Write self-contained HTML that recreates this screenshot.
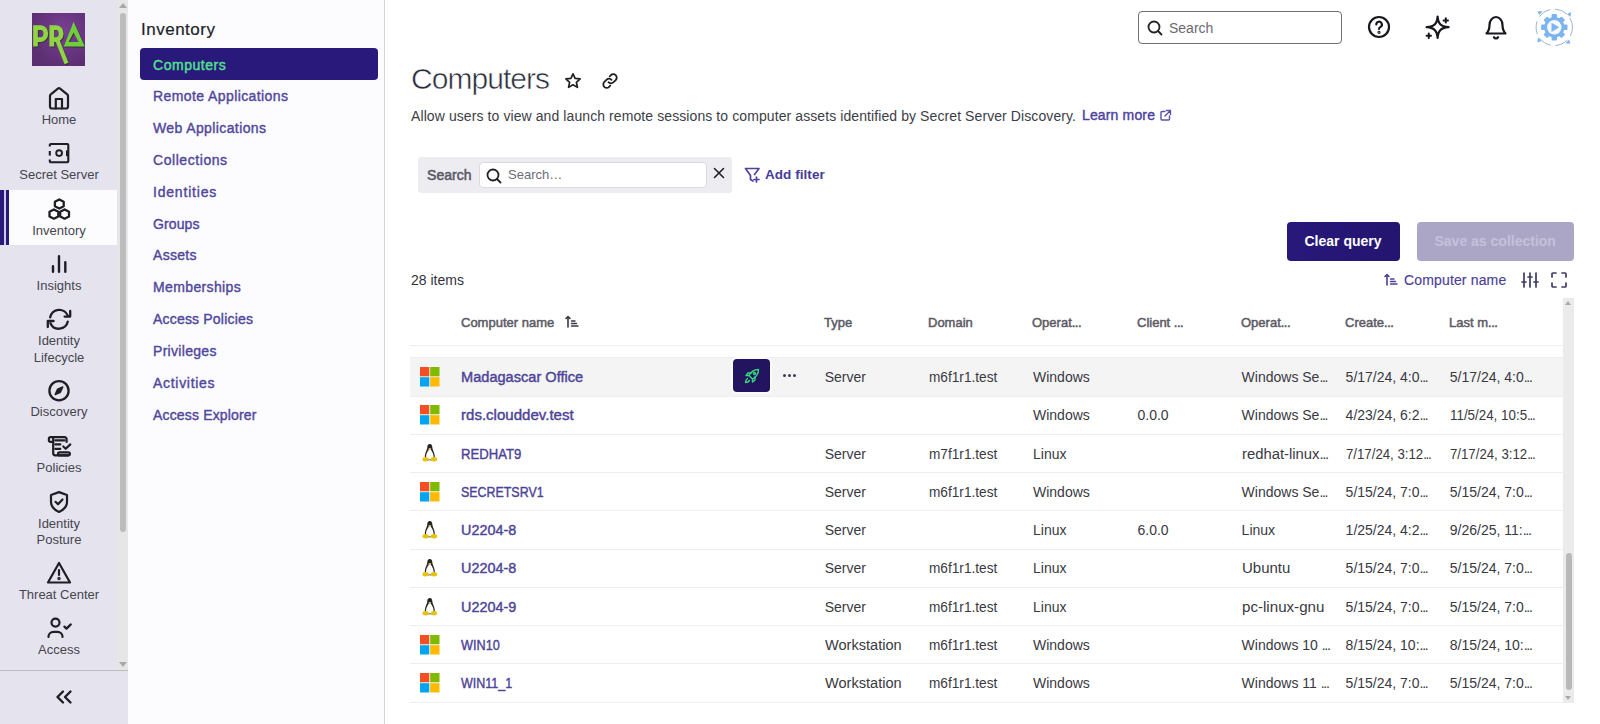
<!DOCTYPE html>
<html><head><meta charset="utf-8">
<style>
*{box-sizing:border-box;margin:0;padding:0}
html,body{width:1600px;height:724px;overflow:hidden;background:#fff;font-family:"Liberation Sans",sans-serif;color:#2b2b35}
.t{position:absolute;white-space:nowrap;line-height:1}
svg{position:absolute;overflow:visible}
#rail{position:absolute;left:0;top:0;width:128px;height:724px;background:#e5e3ee}
#panel{position:absolute;left:128px;top:0;width:257px;height:724px;background:#fcfcfe;border-right:1px solid #d4d4d8}
.rl{font-size:13px;color:#45454f;width:118px;left:0;text-align:center}
.nav{left:153px;font-size:14px;font-weight:400;-webkit-text-stroke:0.4px currentColor;letter-spacing:0.3px;color:#51489b}
.med{-webkit-text-stroke:0.4px currentColor}
.hd{font-size:13px;font-weight:400;-webkit-text-stroke:0.5px currentColor;color:#5b5b66}
.cell{font-size:14px;color:#393942}
.el{letter-spacing:-1.3px}
.lnk{font-size:14px;font-weight:400;-webkit-text-stroke:0.4px currentColor;color:#4d4497;left:461px;transform-origin:0 0}
</style></head>
<body>
<!-- ============ LEFT RAIL ============ -->
<div id="rail">
  <!-- logo -->
  <div style="position:absolute;left:32px;top:13px;width:53px;height:53px;overflow:hidden;background:radial-gradient(ellipse at 60% 35%,#7a3f95,#5c2f72 75%)">
    <svg width="53" height="53" viewBox="0 0 53 53" style="left:0;top:0">
      <g transform="translate(0.9,0.9)" opacity="0.55">
        <g fill="none" stroke="#1d2a0a" stroke-width="4.7" stroke-linejoin="miter">
          <path d="M3.5 33.6 V14.6 H8.8 a5 6 0 0 1 0 12 H3.5"/>
          <path d="M19.8 33.6 V14.6 H24.2 a5 6 0 0 1 0 12 H19.8"/>
          <path d="M25.5 27.5 L34.5 50.5" stroke-width="4.2"/>
        </g>
        <path d="M41.6 8.8 L52.8 33.6 H31.8 Z M41.6 19.5 L36.6 29 H46.6 Z" fill="#1d2a0a" fill-rule="evenodd"/>
      </g>
      <g fill="none" stroke="#8fd443" stroke-width="4.7" stroke-linejoin="miter">
        <path d="M3.5 33.6 V14.6 H8.8 a5 6 0 0 1 0 12 H3.5"/>
        <path d="M19.8 33.6 V14.6 H24.2 a5 6 0 0 1 0 12 H19.8"/>
        <path d="M25.5 27.5 L34.5 50.5" stroke-width="4.2"/>
      </g>
      <path d="M41.6 8.8 L52.8 33.6 H31.8 Z M41.6 19.5 L36.6 29 H46.6 Z" fill="#6fcf3a" fill-rule="evenodd"/>
    </svg>
  </div>
  <!-- active item -->
  <div style="position:absolute;left:0;top:190px;width:118px;height:55px;background:#fcfcfe"></div>
  <div style="position:absolute;left:0;top:190px;width:4px;height:55px;background:#28187a"></div>
  <div style="position:absolute;left:4px;top:190px;width:2px;height:55px;background:#cdc8ea"></div>
  <div style="position:absolute;left:6px;top:190px;width:3px;height:55px;background:#28187a"></div>

  <!-- scrollbar -->
  <div style="position:absolute;left:117px;top:0;width:11px;height:670px;background:#e6e6e6"></div>
  <div style="position:absolute;left:120px;top:13px;width:6px;height:519px;background:#bcbcbc;border-radius:3px"></div>
  <div style="position:absolute;left:119px;top:3px;width:0;height:0;border-left:4px solid transparent;border-right:4px solid transparent;border-bottom:5px solid #a8a8a8"></div>
  <div style="position:absolute;left:119px;top:662px;width:0;height:0;border-left:4px solid transparent;border-right:4px solid transparent;border-top:5px solid #a8a8a8"></div>
  <div style="position:absolute;left:0;top:670px;width:128px;height:1px;background:#bdbcc2"></div>

  <!-- icons -->
  <svg width="24" height="24" viewBox="0 0 24 24" style="left:47px;top:86px" fill="none" stroke="#1e1e24" stroke-width="2.2" stroke-linejoin="round" stroke-linecap="round">
    <path d="M3 10 Q3 9 3.8 8.4 L11.2 2.4 Q12 1.8 12.8 2.4 L20.2 8.4 Q21 9 21 10 V20.5 a2 2 0 0 1 -2 2 H5 a2 2 0 0 1 -2 -2 Z"/>
    <path d="M8.8 22.5 V13 H15 V22.5"/>
  </svg>
  <div class="t rl" style="top:113px">Home</div>

  <svg width="24" height="24" viewBox="0 0 24 24" style="left:47px;top:141px" fill="none" stroke="#1e1e24" stroke-width="2.1" stroke-linejoin="round">
    <path d="M2.8 5.6 V4 a1 1 0 0 1 1 -1 H20.3 a1 1 0 0 1 1 1 V20.3 a1 1 0 0 1 -1 1 H3.8 a1 1 0 0 1 -1 -1 V18.6"/>
    <path d="M2.8 10 V14.6"/>
    <circle cx="12.1" cy="12.1" r="2.9" stroke-width="1.9"/>
    <rect x="19" y="9.4" width="2.3" height="5.8" fill="#1e1e24" stroke="none"/>
  </svg>
  <div class="t rl" style="top:168px">Secret Server</div>

  <svg width="24" height="24" viewBox="0 0 24 24" style="left:47px;top:197px" fill="none" stroke="#1e1e24" stroke-width="2.3" stroke-linejoin="round">
    <path d="M12.3 2.4 L16.7 4.7 V9.3 L12.3 11.6 L7.9 9.3 V4.7 Z"/>
    <path d="M6.9 12.5 L11.3 14.8 V19.4 L6.9 21.7 L2.5 19.4 V14.8 Z"/>
    <path d="M17.6 12.5 L22 14.8 V19.4 L17.6 21.7 L13.2 19.4 V14.8 Z"/>
  </svg>
  <div class="t rl" style="top:224px">Inventory</div>

  <svg width="24" height="24" viewBox="0 0 24 24" style="left:47px;top:252px" fill="none" stroke="#1e1e24" stroke-width="2.4" stroke-linecap="round">
    <path d="M6 14.2 V19.8 M12 4.2 V19.8 M18.3 10.2 V19.8"/>
  </svg>
  <div class="t rl" style="top:279px">Insights</div>

  <svg width="26" height="24" viewBox="0 0 26 24" style="left:46px;top:307px" fill="none" stroke="#1e1e24" stroke-width="2.3" stroke-linecap="round" stroke-linejoin="round">
    <path d="M4.2 10.3 A9.2 9.2 0 0 1 21.8 8.6"/>
    <path d="M24.2 3.8 V9.6 H18.6"/>
    <path d="M21.8 14.6 A9.2 9.2 0 0 1 4.4 16.2"/>
    <path d="M1.8 20 V14 H7.6"/>
  </svg>
  <div class="t rl" style="top:334px">Identity</div>
  <div class="t rl" style="top:351px">Lifecycle</div>

  <svg width="24" height="24" viewBox="0 0 24 24" style="left:47px;top:379px" fill="none" stroke="#1e1e24" stroke-width="2.3" stroke-linejoin="round">
    <circle cx="12" cy="11.7" r="9.6"/>
    <path d="M15.8 7.9 L13.4 13.3 L8.2 15.5 L10.6 10.1 Z" fill="#1e1e24" stroke-width="1.4"/>
  </svg>
  <div class="t rl" style="top:405px">Discovery</div>

  <svg width="26" height="24" viewBox="0 0 26 24" style="left:46px;top:435px" fill="none" stroke="#1e1e24" stroke-width="2.2" stroke-linecap="round" stroke-linejoin="round">
    <path d="M7.2 6.9 H4.4 a1.5 1.5 0 0 1 -1.5 -1.5 V3.7 a1.5 1.5 0 0 1 1.5 -1.5 H18.6 a2 2 0 0 1 2 2 V6.9"/>
    <path d="M7.2 2.2 V18.3 a2 2 0 0 0 2 2 H22"/>
    <rect x="12" y="17.4" width="11.9" height="2.9" rx="1.45"/>
    <path d="M9.3 5.3 H18.5 M9.3 9.4 H14.3 M9.3 13.8 H14.3"/>
    <path d="M17.3 11.5 L19.7 13.8 L24.3 9.4"/>
  </svg>
  <div class="t rl" style="top:461px">Policies</div>

  <svg width="24" height="24" viewBox="0 0 24 24" style="left:47px;top:490px" fill="none" stroke="#1e1e24" stroke-width="2.2" stroke-linecap="round" stroke-linejoin="round">
    <path d="M12 2.1 L20 5 V12 C20 16.8 16.8 19.8 12 21.9 C7.2 19.8 4 16.8 4 12 V5 Z"/>
    <path d="M8.5 11.8 L11 14.3 L15.5 9.5"/>
  </svg>
  <div class="t rl" style="top:517px">Identity</div>
  <div class="t rl" style="top:533px">Posture</div>

  <svg width="26" height="24" viewBox="0 0 26 24" style="left:46px;top:561px" fill="none" stroke="#1e1e24" stroke-width="2.2" stroke-linecap="round" stroke-linejoin="round">
    <path d="M13 2 L24 21.5 H2 Z"/>
    <path d="M13 9 V14"/>
    <circle cx="13" cy="17.5" r="0.6" fill="#1e1e24"/>
  </svg>
  <div class="t rl" style="top:588px">Threat Center</div>

  <svg width="28" height="24" viewBox="0 0 28 24" style="left:45px;top:616px" fill="none" stroke="#1e1e24" stroke-width="2.2" stroke-linecap="round" stroke-linejoin="round">
    <circle cx="10.5" cy="6.6" r="4"/>
    <path d="M3.5 21 V20.5 a5 4.7 0 0 1 5 -4.7 H12.5 a5 4.7 0 0 1 5 4.7 V21"/>
    <path d="M19.4 10.6 L21.5 12.6 L25.8 8.4"/>
  </svg>
  <div class="t rl" style="top:643px">Access</div>

  <svg width="18" height="14" viewBox="0 0 18 14" style="left:55px;top:690px" fill="none" stroke="#1e1e24" stroke-width="2.4" stroke-linecap="round" stroke-linejoin="round">
    <path d="M8 1.5 L2.5 7 L8 12.5 M15.5 1.5 L10 7 L15.5 12.5"/>
  </svg>
</div>

<!-- ============ PANEL ============ -->
<div id="panel"></div>
<div class="t" style="left:141px;top:21px;font-size:17px;letter-spacing:0.5px;color:#22222a;-webkit-text-stroke:0.2px currentColor">Inventory</div>
<div style="position:absolute;left:140px;top:48px;width:238px;height:32px;background:#28197a;border-radius:4px"></div>
<div class="t nav" style="top:58px;color:#50df8e;letter-spacing:0.54px;-webkit-text-stroke:0.5px currentColor">Computers</div>
<div class="t nav" style="top:89px;letter-spacing:0.41px">Remote Applications</div>
<div class="t nav" style="top:121px;letter-spacing:0.39px">Web Applications</div>
<div class="t nav" style="top:153px;letter-spacing:0.56px">Collections</div>
<div class="t nav" style="top:185px;letter-spacing:0.80px">Identities</div>
<div class="t nav" style="top:217px;letter-spacing:0.10px">Groups</div>
<div class="t nav" style="top:248px">Assets</div>
<div class="t nav" style="top:280px;letter-spacing:0.37px">Memberships</div>
<div class="t nav" style="top:312px;letter-spacing:0.19px">Access Policies</div>
<div class="t nav" style="top:344px">Privileges</div>
<div class="t nav" style="top:376px;letter-spacing:0.70px">Activities</div>
<div class="t nav" style="top:408px;letter-spacing:0.16px">Access Explorer</div>

<!-- ============ MAIN ============ -->
<div id="main"></div>
<!-- top header -->
<div style="position:absolute;left:1138px;top:11px;width:204px;height:33px;border:1px solid #707070;border-radius:4px;background:#fff"></div>
<svg width="16" height="16" viewBox="0 0 16 16" style="left:1147px;top:19.5px" fill="none" stroke="#222" stroke-width="1.8" stroke-linecap="round"><circle cx="7" cy="7" r="5.5"/><path d="M11 11 L14.5 14.5"/></svg>
<div class="t" style="left:1169px;top:20.6px;font-size:14px;color:#6a6a72">Search</div>
<svg width="24" height="24" viewBox="0 0 24 24" style="left:1367px;top:15px" fill="none" stroke="#18181c" stroke-width="2.2" stroke-linecap="round"><circle cx="12" cy="12" r="10"/><path d="M9.3 9.5 a2.8 2.8 0 1 1 4.2 2.4 C12.5 12.5 12 13 12 14"/><circle cx="12" cy="17.3" r="0.5" fill="#18181c"/></svg>
<svg width="26" height="26" viewBox="0 0 26 26" style="left:1424px;top:14px" fill="none" stroke="#18181c" stroke-width="2.2" stroke-linecap="round" stroke-linejoin="round"><path d="M13.6 2.6 C14.2 9.6 16.4 12.5 24.6 13.2 C16.4 13.9 14.2 16.9 13.6 23.9 C13 16.9 10.8 13.9 2.6 13.2 C10.8 12.5 13 9.6 13.6 2.6 Z"/><path d="M21.8 4.2 V8.6 M19.6 6.4 H24" stroke-width="2"/><path d="M4.8 19.6 V24 M2.6 21.8 H7" stroke-width="2"/></svg>
<svg width="24" height="26" viewBox="0 0 24 26" style="left:1484px;top:14px" fill="none" stroke="#18181c" stroke-width="2.2" stroke-linecap="round" stroke-linejoin="round"><path d="M5.5 11 a6.5 8 0 0 1 13 0 C18.5 15 19.5 17.5 21.5 19.5 H2.5 C4.5 17.5 5.5 15 5.5 11 Z"/><path d="M10 23.2 a2.2 2.2 0 0 0 4 0"/></svg>
<!-- avatar gear -->
<svg width="40" height="40" viewBox="0 0 40 40" style="left:1534px;top:7px">
  <circle cx="20.3" cy="20.3" r="18.2" fill="none" stroke="#93a9c8" stroke-width="0.9" stroke-dasharray="13 5" stroke-dashoffset="4"/>
  <g fill="#7ab2ee">
    <path d="M3.5 4.5 L8.5 4 L5.5 8 Z"/><path d="M37 5 L36.5 10 L33 7 Z"/>
    <path d="M3.5 35.5 L4 30.5 L7.5 34 Z"/><path d="M36.5 36.5 L31.5 36.5 L35 32.5 Z"/>
  </g>
  <g transform="translate(20.3,20.3)" fill="#7cb4f0">
    <circle r="10.3"/>
    <g id="teeth"><rect x="-2.7" y="-13.2" width="5.4" height="5" rx="1"/><rect x="-2.7" y="8.2" width="5.4" height="5" rx="1"/><rect x="-13.2" y="-2.7" width="5" height="5.4" rx="1"/><rect x="8.2" y="-2.7" width="5" height="5.4" rx="1"/></g>
    <g transform="rotate(45)"><rect x="-2.7" y="-12.8" width="5.4" height="5" rx="1"/><rect x="-2.7" y="7.8" width="5.4" height="5" rx="1"/><rect x="-12.8" y="-2.7" width="5" height="5.4" rx="1"/><rect x="7.8" y="-2.7" width="5" height="5.4" rx="1"/></g>
    <circle r="7.2" fill="#f5faff"/>
    <path d="M-2.8 -4.6 L5 0 L-2.8 4.6 Z"/>
  </g>
</svg>

<!-- title -->
<div class="t" style="left:411px;top:63.8px;font-size:30px;letter-spacing:-0.95px;color:#2a2c39;-webkit-text-stroke:0.55px #fff">Computers</div>
<svg width="18" height="18" viewBox="0 0 24 24" style="left:564px;top:72px" fill="none" stroke="#1e1e24" stroke-width="2.3" stroke-linejoin="round"><path d="M12 2.5 L14.8 8.6 L21.5 9.3 L16.5 13.8 L17.9 20.5 L12 17.1 L6.1 20.5 L7.5 13.8 L2.5 9.3 L9.2 8.6 Z"/></svg>
<svg width="18" height="18" viewBox="0 0 24 24" style="left:601px;top:72px" fill="none" stroke="#1e1e24" stroke-width="2.4" stroke-linecap="round"><path d="M10 13.5 a4.5 4.5 0 0 0 6.4 0.4 l3.2 -3.2 a4.5 4.5 0 0 0 -6.4 -6.4 l-1.5 1.5"/><path d="M14 10.5 a4.5 4.5 0 0 0 -6.4 -0.4 l-3.2 3.2 a4.5 4.5 0 0 0 6.4 6.4 l1.5 -1.5"/></svg>

<!-- description -->
<div class="t" style="left:411px;top:108.8px;font-size:14px;letter-spacing:0.09px;color:#3d3d47">Allow users to view and launch remote sessions to computer assets identified by Secret Server Discovery.</div>
<div class="t med" style="left:1082px;top:108.2px;font-size:14px;letter-spacing:0.15px;color:#4d43a0">Learn more</div>
<svg width="13" height="13" viewBox="0 0 13 13" style="left:1159px;top:109px" fill="none" stroke="#5a50a8" stroke-width="1.4" stroke-linecap="round" stroke-linejoin="round"><path d="M6 2.5 H3 a1 1 0 0 0 -1 1 V10 a1 1 0 0 0 1 1 H9.5 a1 1 0 0 0 1 -1 V7"/><path d="M7.5 1.5 H11.5 V5.5 M11.5 1.5 L6 7"/></svg>

<!-- filter bar -->
<div style="position:absolute;left:418px;top:156.5px;width:314px;height:36px;background:#ededf1;border-radius:3px"></div>
<div class="t" style="left:427px;top:167.8px;font-size:14px;letter-spacing:0.05px;-webkit-text-stroke:0.55px currentColor;color:#5a5a66">Search</div>
<div style="position:absolute;left:478.5px;top:162px;width:228px;height:26px;background:#fff;border:1px solid #dadade;border-radius:4px"></div>
<svg width="16" height="16" viewBox="0 0 16 16" style="left:486px;top:167.5px" fill="none" stroke="#222" stroke-width="1.8" stroke-linecap="round"><circle cx="7" cy="7" r="5.5"/><path d="M11 11 L14.5 14.5"/></svg>
<div class="t" style="left:508px;top:168px;font-size:13px;color:#6c6c76">Search…</div>
<svg width="12" height="12" viewBox="0 0 12 12" style="left:713px;top:166.5px" fill="none" stroke="#222" stroke-width="1.6" stroke-linecap="round"><path d="M1.5 1.5 L10.5 10.5 M10.5 1.5 L1.5 10.5"/></svg>
<svg width="17" height="16" viewBox="0 0 17 16" style="left:743.5px;top:167px" fill="none" stroke="#4d42a0" stroke-width="1.7" stroke-linecap="round" stroke-linejoin="round"><path d="M9 14 L6.5 12.5 V8.5 L1.5 1.5 H15 L10.5 7.5"/><path d="M12.5 10 V15 M10 12.5 H15"/></svg>
<div class="t" style="left:765px;top:168.1px;font-size:13.5px;font-weight:700;letter-spacing:0.05px;color:#463c9c">Add filter</div>

<!-- buttons -->
<div style="position:absolute;left:1287px;top:222px;width:113px;height:38.5px;background:linear-gradient(90deg,#27187a,#241570);border-radius:4px"></div>
<div class="t" style="left:1304.5px;top:234.1px;font-size:14px;font-weight:700;color:#fff">Clear query</div>
<div style="position:absolute;left:1417px;top:222px;width:157px;height:38.5px;background:#aca6c6;border-radius:4px"></div>
<div class="t" style="left:1434.5px;top:234.1px;font-size:14px;font-weight:700;color:#c5c0da">Save as collection</div>

<!-- items / sort -->
<div class="t" style="left:411px;top:272.9px;font-size:14px;color:#33333b">28 items</div>
<svg width="14" height="13" viewBox="0 0 14 13" style="left:1383.5px;top:272.5px" fill="none" stroke="#4a4096" stroke-width="1.6" stroke-linecap="round" stroke-linejoin="round"><path d="M3 12 V1.5 M1 3.5 L3 1.5 L5 3.5"/><path d="M6.5 6 H10 M6.5 8.5 H11.5 M6.5 11 H13" stroke-width="1.4"/></svg>
<div class="t" style="left:1404px;top:272.9px;font-size:14px;letter-spacing:0.15px;-webkit-text-stroke:0.15px currentColor;color:#4a4096">Computer name</div>
<svg width="18" height="16" viewBox="0 0 18 16" style="left:1521px;top:272px" fill="none" stroke="#3e3a66" stroke-width="1.7" stroke-linecap="round"><path d="M3 1 V15 M9 1 V15 M15 1 V15"/><path d="M1 10 H5 M7 5 H11 M13 10 H17"/></svg>
<svg width="16" height="16" viewBox="0 0 16 16" style="left:1551px;top:272px" fill="none" stroke="#3e3a66" stroke-width="1.7" stroke-linecap="round" stroke-linejoin="round"><path d="M1 5 V2 a1 1 0 0 1 1 -1 H5 M11 1 H14 a1 1 0 0 1 1 1 V5 M15 11 V14 a1 1 0 0 1 -1 1 H11 M5 15 H2 a1 1 0 0 1 -1 -1 V11"/></svg>

<!-- table header -->
<div class="t hd" style="left:461px;top:315.5px">Computer name</div>
<svg width="14" height="13" viewBox="0 0 14 13" style="left:565px;top:315px" fill="none" stroke="#3a3a44" stroke-width="1.6" stroke-linecap="round" stroke-linejoin="round"><path d="M3 12 V1.5 M1 3.5 L3 1.5 L5 3.5"/><path d="M6.5 6 H10 M6.5 8.5 H11.5 M6.5 11 H13" stroke-width="1.4"/></svg>
<div class="t hd" style="left:824px;top:315.5px">Type</div>
<div class="t hd" style="left:928px;top:315.5px">Domain</div>
<div class="t hd" style="left:1032px;top:315.5px">Operat<span class="el" style="letter-spacing:-0.5px">...</span></div>
<div class="t hd" style="left:1137px;top:315.5px">Client <span class="el" style="letter-spacing:-0.5px">...</span></div>
<div class="t hd" style="left:1241px;top:315.5px">Operat<span class="el" style="letter-spacing:-0.5px">...</span></div>
<div class="t hd" style="left:1345px;top:315.5px">Create<span class="el" style="letter-spacing:-0.5px">...</span></div>
<div class="t hd" style="left:1449px;top:315.5px">Last m<span class="el" style="letter-spacing:-0.5px">...</span></div>
<div style="position:absolute;left:410px;top:345px;width:1153px;height:1px;background:#eeeef0"></div>
<!-- table scrollbar -->
<div style="position:absolute;left:1563px;top:298px;width:11px;height:405px;background:#ebebeb"></div>
<div style="position:absolute;left:1566px;top:553px;width:6px;height:137px;background:#b9b9b9;border-radius:3px"></div>
<div style="position:absolute;left:1565px;top:301px;width:0;height:0;border-left:3.5px solid transparent;border-right:3.5px solid transparent;border-bottom:4px solid #a9a9a9"></div>
<div style="position:absolute;left:1565px;top:696px;width:0;height:0;border-left:3.5px solid transparent;border-right:3.5px solid transparent;border-top:4px solid #a9a9a9"></div>
<div style="position:absolute;left:410px;top:357px;width:1153px;height:39px;background:#f4f4f5"></div>
<div style="position:absolute;left:410px;top:356.8px;width:1153px;height:1px;background:#eeeef0"></div>
<div style="position:absolute;left:410px;top:395.5px;width:1153px;height:1px;background:#eeeef0"></div>
<div style="position:absolute;left:410px;top:433.7px;width:1153px;height:1px;background:#eeeef0"></div>
<div style="position:absolute;left:410px;top:472.0px;width:1153px;height:1px;background:#eeeef0"></div>
<div style="position:absolute;left:410px;top:510.3px;width:1153px;height:1px;background:#eeeef0"></div>
<div style="position:absolute;left:410px;top:548.5px;width:1153px;height:1px;background:#eeeef0"></div>
<div style="position:absolute;left:410px;top:586.8px;width:1153px;height:1px;background:#eeeef0"></div>
<div style="position:absolute;left:410px;top:625.1px;width:1153px;height:1px;background:#eeeef0"></div>
<div style="position:absolute;left:410px;top:663.4px;width:1153px;height:1px;background:#eeeef0"></div>
<div style="position:absolute;left:410px;top:701.7px;width:1153px;height:1px;background:#eeeef0"></div>
<svg width="20" height="20" viewBox="0 0 20 20" style="left:420px;top:366.7px"><rect x="0" y="0" width="9.3" height="9.3" fill="#f25022"/><rect x="10.2" y="0" width="9.3" height="9.3" fill="#7fba00"/><rect x="0" y="10.2" width="9.3" height="9.3" fill="#00a4ef"/><rect x="10.2" y="10.2" width="9.3" height="9.3" fill="#ffb900"/></svg>
<div class="t lnk" style="top:369.8px;transform:scaleX(1.042)">Madagascar Office</div>
<div class="t cell" style="left:824.7px;top:369.8px">Server</div>
<div class="t cell" style="left:928.8px;top:369.8px;transform:scaleX(0.975);transform-origin:0 0">m6f1r1.test</div>
<div class="t cell" style="left:1033px;top:369.8px">Windows</div>
<div class="t cell" style="left:1241.6px;top:369.8px">Windows Se<span class="el">...</span></div>
<div class="t cell" style="left:1345.6px;top:369.8px">5/17/24, 4:0<span class="el">...</span></div>
<div class="t cell" style="left:1449.8px;top:369.8px">5/17/24, 4:0<span class="el">...</span></div>
<svg width="20" height="20" viewBox="0 0 20 20" style="left:420px;top:405.2px"><rect x="0" y="0" width="9.3" height="9.3" fill="#f25022"/><rect x="10.2" y="0" width="9.3" height="9.3" fill="#7fba00"/><rect x="0" y="10.2" width="9.3" height="9.3" fill="#00a4ef"/><rect x="10.2" y="10.2" width="9.3" height="9.3" fill="#ffb900"/></svg>
<div class="t lnk" style="top:408.3px;transform:scaleX(1.075)">rds.clouddev.test</div>
<div class="t cell" style="left:1033px;top:408.3px">Windows</div>
<div class="t cell" style="left:1137.5px;top:408.3px">0.0.0</div>
<div class="t cell" style="left:1241.6px;top:408.3px">Windows Se<span class="el">...</span></div>
<div class="t cell" style="left:1345.6px;top:408.3px">4/23/24, 6:2<span class="el">...</span></div>
<div class="t cell" style="left:1449.8px;top:408.3px;transform:scaleX(0.955);transform-origin:0 0">11/5/24, 10:5<span class="el">...</span></div>
<svg width="20" height="20" viewBox="0 0 20 20" style="left:420px;top:443.4px"><path d="M9.8 1 C8 1 7.3 2.5 7.3 4.3 C7.2 7 5 9.5 4.8 13 C4.7 15.5 6 17.2 8 17.2 H11.6 C13.6 17.2 14.9 15.5 14.8 13 C14.6 9.5 12.4 7 12.3 4.3 C12.3 2.5 11.6 1 9.8 1 Z" fill="#262626"/><path d="M9.8 5.6 C8.3 7.3 6.1 10.4 6 13.5 C6 15.5 7.4 16.6 9.8 16.6 C12.2 16.6 13.6 15.5 13.6 13.5 C13.5 10.4 11.3 7.3 9.8 5.6 Z" fill="#fff"/><ellipse cx="9.8" cy="5.9" rx="1.4" ry="1" fill="#d9c36a"/><ellipse cx="5.6" cy="16.2" rx="3.1" ry="2.2" fill="#e8c20a"/><ellipse cx="14" cy="16.2" rx="3.1" ry="2.2" fill="#e8c20a"/></svg>
<div class="t lnk" style="top:446.5px;transform:scaleX(0.9375)">REDHAT9</div>
<div class="t cell" style="left:824.7px;top:446.5px">Server</div>
<div class="t cell" style="left:928.8px;top:446.5px;transform:scaleX(0.975);transform-origin:0 0">m7f1r1.test</div>
<div class="t cell" style="left:1033px;top:446.5px">Linux</div>
<div class="t cell" style="left:1241.6px;top:446.5px;transform:scaleX(1.06);transform-origin:0 0">redhat-linux<span class="el">...</span></div>
<div class="t cell" style="left:1345.6px;top:446.5px;transform:scaleX(0.944);transform-origin:0 0">7/17/24, 3:12<span class="el">...</span></div>
<div class="t cell" style="left:1449.8px;top:446.5px;transform:scaleX(0.944);transform-origin:0 0">7/17/24, 3:12<span class="el">...</span></div>
<svg width="20" height="20" viewBox="0 0 20 20" style="left:420px;top:481.7px"><rect x="0" y="0" width="9.3" height="9.3" fill="#f25022"/><rect x="10.2" y="0" width="9.3" height="9.3" fill="#7fba00"/><rect x="0" y="10.2" width="9.3" height="9.3" fill="#00a4ef"/><rect x="10.2" y="10.2" width="9.3" height="9.3" fill="#ffb900"/></svg>
<div class="t lnk" style="top:484.8px;transform:scaleX(0.887)">SECRETSRV1</div>
<div class="t cell" style="left:824.7px;top:484.8px">Server</div>
<div class="t cell" style="left:928.8px;top:484.8px;transform:scaleX(0.975);transform-origin:0 0">m6f1r1.test</div>
<div class="t cell" style="left:1033px;top:484.8px">Windows</div>
<div class="t cell" style="left:1241.6px;top:484.8px">Windows Se<span class="el">...</span></div>
<div class="t cell" style="left:1345.6px;top:484.8px">5/15/24, 7:0<span class="el">...</span></div>
<div class="t cell" style="left:1449.8px;top:484.8px">5/15/24, 7:0<span class="el">...</span></div>
<svg width="20" height="20" viewBox="0 0 20 20" style="left:420px;top:520.0px"><path d="M9.8 1 C8 1 7.3 2.5 7.3 4.3 C7.2 7 5 9.5 4.8 13 C4.7 15.5 6 17.2 8 17.2 H11.6 C13.6 17.2 14.9 15.5 14.8 13 C14.6 9.5 12.4 7 12.3 4.3 C12.3 2.5 11.6 1 9.8 1 Z" fill="#262626"/><path d="M9.8 5.6 C8.3 7.3 6.1 10.4 6 13.5 C6 15.5 7.4 16.6 9.8 16.6 C12.2 16.6 13.6 15.5 13.6 13.5 C13.5 10.4 11.3 7.3 9.8 5.6 Z" fill="#fff"/><ellipse cx="9.8" cy="5.9" rx="1.4" ry="1" fill="#d9c36a"/><ellipse cx="5.6" cy="16.2" rx="3.1" ry="2.2" fill="#e8c20a"/><ellipse cx="14" cy="16.2" rx="3.1" ry="2.2" fill="#e8c20a"/></svg>
<div class="t lnk" style="top:523.1px;transform:scaleX(1.028)">U2204-8</div>
<div class="t cell" style="left:824.7px;top:523.1px">Server</div>
<div class="t cell" style="left:1033px;top:523.1px">Linux</div>
<div class="t cell" style="left:1137.5px;top:523.1px">6.0.0</div>
<div class="t cell" style="left:1241.6px;top:523.1px">Linux</div>
<div class="t cell" style="left:1345.6px;top:523.1px">1/25/24, 4:2<span class="el">...</span></div>
<div class="t cell" style="left:1449.8px;top:523.1px">9/26/25, 11:<span class="el">...</span></div>
<svg width="20" height="20" viewBox="0 0 20 20" style="left:420px;top:558.2px"><path d="M9.8 1 C8 1 7.3 2.5 7.3 4.3 C7.2 7 5 9.5 4.8 13 C4.7 15.5 6 17.2 8 17.2 H11.6 C13.6 17.2 14.9 15.5 14.8 13 C14.6 9.5 12.4 7 12.3 4.3 C12.3 2.5 11.6 1 9.8 1 Z" fill="#262626"/><path d="M9.8 5.6 C8.3 7.3 6.1 10.4 6 13.5 C6 15.5 7.4 16.6 9.8 16.6 C12.2 16.6 13.6 15.5 13.6 13.5 C13.5 10.4 11.3 7.3 9.8 5.6 Z" fill="#fff"/><ellipse cx="9.8" cy="5.9" rx="1.4" ry="1" fill="#d9c36a"/><ellipse cx="5.6" cy="16.2" rx="3.1" ry="2.2" fill="#e8c20a"/><ellipse cx="14" cy="16.2" rx="3.1" ry="2.2" fill="#e8c20a"/></svg>
<div class="t lnk" style="top:561.3px;transform:scaleX(1.028)">U2204-8</div>
<div class="t cell" style="left:824.7px;top:561.3px">Server</div>
<div class="t cell" style="left:928.8px;top:561.3px;transform:scaleX(0.975);transform-origin:0 0">m6f1r1.test</div>
<div class="t cell" style="left:1033px;top:561.3px">Linux</div>
<div class="t cell" style="left:1241.6px;top:561.3px;transform:scaleX(1.07);transform-origin:0 0">Ubuntu</div>
<div class="t cell" style="left:1345.6px;top:561.3px">5/15/24, 7:0<span class="el">...</span></div>
<div class="t cell" style="left:1449.8px;top:561.3px">5/15/24, 7:0<span class="el">...</span></div>
<svg width="20" height="20" viewBox="0 0 20 20" style="left:420px;top:596.5px"><path d="M9.8 1 C8 1 7.3 2.5 7.3 4.3 C7.2 7 5 9.5 4.8 13 C4.7 15.5 6 17.2 8 17.2 H11.6 C13.6 17.2 14.9 15.5 14.8 13 C14.6 9.5 12.4 7 12.3 4.3 C12.3 2.5 11.6 1 9.8 1 Z" fill="#262626"/><path d="M9.8 5.6 C8.3 7.3 6.1 10.4 6 13.5 C6 15.5 7.4 16.6 9.8 16.6 C12.2 16.6 13.6 15.5 13.6 13.5 C13.5 10.4 11.3 7.3 9.8 5.6 Z" fill="#fff"/><ellipse cx="9.8" cy="5.9" rx="1.4" ry="1" fill="#d9c36a"/><ellipse cx="5.6" cy="16.2" rx="3.1" ry="2.2" fill="#e8c20a"/><ellipse cx="14" cy="16.2" rx="3.1" ry="2.2" fill="#e8c20a"/></svg>
<div class="t lnk" style="top:599.6px;transform:scaleX(1.028)">U2204-9</div>
<div class="t cell" style="left:824.7px;top:599.6px">Server</div>
<div class="t cell" style="left:928.8px;top:599.6px;transform:scaleX(0.975);transform-origin:0 0">m6f1r1.test</div>
<div class="t cell" style="left:1033px;top:599.6px">Linux</div>
<div class="t cell" style="left:1241.6px;top:599.6px;transform:scaleX(1.08);transform-origin:0 0">pc-linux-gnu</div>
<div class="t cell" style="left:1345.6px;top:599.6px">5/15/24, 7:0<span class="el">...</span></div>
<div class="t cell" style="left:1449.8px;top:599.6px">5/15/24, 7:0<span class="el">...</span></div>
<svg width="20" height="20" viewBox="0 0 20 20" style="left:420px;top:634.8px"><rect x="0" y="0" width="9.3" height="9.3" fill="#f25022"/><rect x="10.2" y="0" width="9.3" height="9.3" fill="#7fba00"/><rect x="0" y="10.2" width="9.3" height="9.3" fill="#00a4ef"/><rect x="10.2" y="10.2" width="9.3" height="9.3" fill="#ffb900"/></svg>
<div class="t lnk" style="top:637.9px;transform:scaleX(0.905)">WIN10</div>
<div class="t cell" style="left:824.7px;top:637.9px;transform:scaleX(1.04);transform-origin:0 0">Workstation</div>
<div class="t cell" style="left:928.8px;top:637.9px;transform:scaleX(0.975);transform-origin:0 0">m6f1r1.test</div>
<div class="t cell" style="left:1033px;top:637.9px">Windows</div>
<div class="t cell" style="left:1241.6px;top:637.9px">Windows 10 <span class="el">...</span></div>
<div class="t cell" style="left:1345.6px;top:637.9px">8/15/24, 10:<span class="el">...</span></div>
<div class="t cell" style="left:1449.8px;top:637.9px">8/15/24, 10:<span class="el">...</span></div>
<svg width="20" height="20" viewBox="0 0 20 20" style="left:420px;top:673.2px"><rect x="0" y="0" width="9.3" height="9.3" fill="#f25022"/><rect x="10.2" y="0" width="9.3" height="9.3" fill="#7fba00"/><rect x="0" y="10.2" width="9.3" height="9.3" fill="#00a4ef"/><rect x="10.2" y="10.2" width="9.3" height="9.3" fill="#ffb900"/></svg>
<div class="t lnk" style="top:676.3px;transform:scaleX(0.893)">WIN11_1</div>
<div class="t cell" style="left:824.7px;top:676.3px;transform:scaleX(1.04);transform-origin:0 0">Workstation</div>
<div class="t cell" style="left:928.8px;top:676.3px;transform:scaleX(0.975);transform-origin:0 0">m6f1r1.test</div>
<div class="t cell" style="left:1033px;top:676.3px">Windows</div>
<div class="t cell" style="left:1241.6px;top:676.3px">Windows 11 <span class="el">...</span></div>
<div class="t cell" style="left:1345.6px;top:676.3px">5/15/24, 7:0<span class="el">...</span></div>
<div class="t cell" style="left:1449.8px;top:676.3px">5/15/24, 7:0<span class="el">...</span></div>
<!-- rocket button -->
<div style="position:absolute;left:733px;top:359px;width:37px;height:33px;background:#23145f;border-radius:4px;box-shadow:0 0 0 2px #fbfaff"></div>
<svg width="16" height="16" viewBox="0 0 16 16" style="left:743.5px;top:367.5px" fill="none" stroke="#37d77a" stroke-width="1.4" stroke-linecap="round" stroke-linejoin="round"><path d="M14.5 1.5 C10 1.5 7 4 5 7.5 L8.5 11 C12 9 14.5 6 14.5 1.5 Z"/><path d="M5 7.5 L2 7.5 L4 5 H7"/><path d="M8.5 11 V14 L11 12 V9"/><path d="M3.5 10.5 C2 11.5 1.5 13 1.5 14.5 C3 14.5 4.5 14 5.5 12.5"/><circle cx="10.5" cy="5.5" r="1"/></svg>
<div style="position:absolute;left:783px;top:373.8px;width:3px;height:3px;border-radius:50%;background:#3d3a5c"></div>
<div style="position:absolute;left:788px;top:373.8px;width:3px;height:3px;border-radius:50%;background:#3d3a5c"></div>
<div style="position:absolute;left:793px;top:373.8px;width:3px;height:3px;border-radius:50%;background:#3d3a5c"></div>
</body></html>
